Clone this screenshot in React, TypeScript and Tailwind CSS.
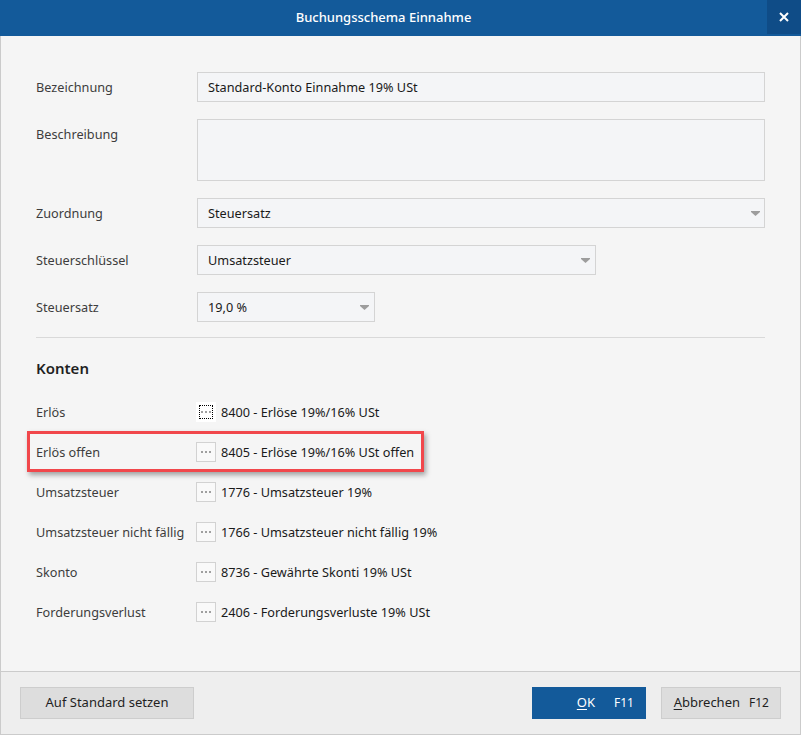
import React from "react";

function Arrow() {
  return (
    <svg width="9" height="5" viewBox="0 0 9 5" className="shrink-0">
      <path d="M0 0H9V1L4.5 5L0 1Z" fill="#9d9d9d" />
    </svg>
  );
}

function Dots() {
  return (
    <svg width="10" height="2" viewBox="0 0 10 2">
      <rect x="0" y="0" width="2" height="2" fill="#a0a0a0" />
      <rect x="4" y="0" width="2" height="2" fill="#a0a0a0" />
      <rect x="8" y="0" width="2" height="2" fill="#a0a0a0" />
    </svg>
  );
}

function FieldLabel({ children }: { children: React.ReactNode }) {
  return <div className="w-[161px] h-[30px] shrink-0 flex items-center pt-[2px] text-[#3d3d3d]">{children}</div>;
}

function AccountRow({
  label,
  value,
  focused,
  highlight,
}: {
  label: string;
  value: string;
  focused?: boolean;
  highlight?: boolean;
}) {
  return (
    <div className="relative h-[40px] flex items-center">
      <div className="w-[160px] shrink-0 pt-[2px] text-[#3d3d3d]">{label}</div>
      {focused ? (
        <div className="w-[20px] h-[20px] bg-white border border-white flex items-center justify-center outline-1 outline-dotted outline-black outline-offset-[-4px]">
          <Dots />
        </div>
      ) : (
        <div className="w-[20px] h-[20px] bg-[#f9f9f9] border border-[#d2d2d2] flex items-center justify-center">
          <Dots />
        </div>
      )}
      <div className="ml-[5px] pt-[2px] text-[#1a1a1a]">{value}</div>
      {highlight && (
        <div className="absolute left-[-9px] top-[-1px] w-[397px] h-[41px] border-[3px] border-[#f1474b] shadow-[2px_3px_5px_rgba(0,0,0,0.35)]" />
      )}
    </div>
  );
}

export default function App() {
  return (
    <div className="w-[801px] h-[735px] flex flex-col bg-[#f5f5f5] font-['Noto_Sans','Open_Sans',sans-serif] text-[12.7px] overflow-hidden">
      {/* Title bar */}
      <div className="h-[36px] shrink-0 bg-[#135a9a] flex">
        <div className="flex-1 flex items-center justify-center text-white text-[13px] font-medium">
          Buchungsschema Einnahme
        </div>
        <div className="w-[34px] h-[34px] bg-[#0f4c87] flex items-center justify-center">
          <svg width="10" height="10" viewBox="0 0 10 10">
            <path d="M1 1L9 9M9 1L1 9" stroke="white" strokeWidth="2" />
          </svg>
        </div>
      </div>

      {/* Body */}
      <div className="flex-1 flex flex-col border-x border-[#cbcbcb] pl-[35px] pr-[35px] pt-[36px]">
        <div className="flex flex-col gap-[17px]">
          <div className="flex items-start">
            <FieldLabel>Bezeichnung</FieldLabel>
            <div className="flex-1 h-[30px] border border-[#d4d4d4] bg-[#f4f5f7] flex items-center pt-[2px] pl-[10px] text-[#1a1a1a]">
              Standard-Konto Einnahme 19% USt
            </div>
          </div>
          <div className="flex items-start">
            <FieldLabel>Beschreibung</FieldLabel>
            <div className="flex-1 h-[62px] border border-[#d4d4d4] bg-[#f4f5f7]" />
          </div>
          <div className="flex items-start">
            <FieldLabel>Zuordnung</FieldLabel>
            <div className="flex-1 h-[30px] border border-[#d4d4d4] bg-[#f4f5f7] flex items-center justify-between pl-[10px] pr-[4px] text-[#1a1a1a]">
              <span className="pt-[2px]">Steuersatz</span>
              <Arrow />
            </div>
          </div>
          <div className="flex items-start">
            <FieldLabel>Steuerschlüssel</FieldLabel>
            <div className="w-[399px] h-[30px] border border-[#d4d4d4] bg-[#f4f5f7] flex items-center justify-between pl-[10px] pr-[5px] text-[#1a1a1a]">
              <span className="pt-[2px]">Umsatzsteuer</span>
              <Arrow />
            </div>
          </div>
          <div className="flex items-start">
            <FieldLabel>Steuersatz</FieldLabel>
            <div className="w-[178px] h-[30px] border border-[#d4d4d4] bg-[#f4f5f7] flex items-center justify-between pl-[10px] pr-[5px] text-[#1a1a1a]">
              <span className="pt-[2px]">19,0 %</span>
              <Arrow />
            </div>
          </div>
        </div>

        <div className="mt-[15px] h-px bg-[#d9d9d9]" />

        <div className="mt-[18px] h-[24px] flex items-center text-[15px] font-semibold text-[#1f1f1f]">Konten</div>

        <div className="mt-[12px] flex flex-col">
          <AccountRow label="Erlös" value="8400 - Erlöse 19%/16% USt" focused />
          <AccountRow label="Erlös offen" value="8405 - Erlöse 19%/16% USt offen" highlight />
          <AccountRow label="Umsatzsteuer" value="1776 - Umsatzsteuer 19%" />
          <AccountRow label="Umsatzsteuer nicht fällig" value="1766 - Umsatzsteuer nicht fällig 19%" />
          <AccountRow label="Skonto" value="8736 - Gewährte Skonti 19% USt" />
          <AccountRow label="Forderungsverlust" value="2406 - Forderungsverluste 19% USt" />
        </div>
      </div>

      {/* Footer */}
      <div className="h-[64px] shrink-0 bg-[#eeeeee] border border-[#cbcbcb] flex items-center pl-[19px] pr-[19px]">
        <div className="w-[174px] h-[32px] bg-[#dddddd] border border-[#cdcdcd] flex items-center justify-center text-[#1f1f1f] text-[13px]">
          Auf Standard setzen
        </div>
        <div className="flex-1" />
        <div className="w-[114px] h-[32px] bg-[#135a9a] flex items-center justify-end pr-[12px] text-white text-[13px]">
          <span>
            <span className="underline underline-offset-2">O</span>K
          </span>
          <span className="ml-[19px] text-[12px]">F11</span>
        </div>
        <div className="ml-[15px] w-[120px] h-[32px] bg-[#dddddd] border border-[#cdcdcd] flex items-center justify-end pr-[11px] text-[#1f1f1f] text-[13px]">
          <span>
            <span className="underline underline-offset-2">A</span>bbrechen
          </span>
          <span className="ml-[9px] text-[12px]">F12</span>
        </div>
      </div>
    </div>
  );
}
